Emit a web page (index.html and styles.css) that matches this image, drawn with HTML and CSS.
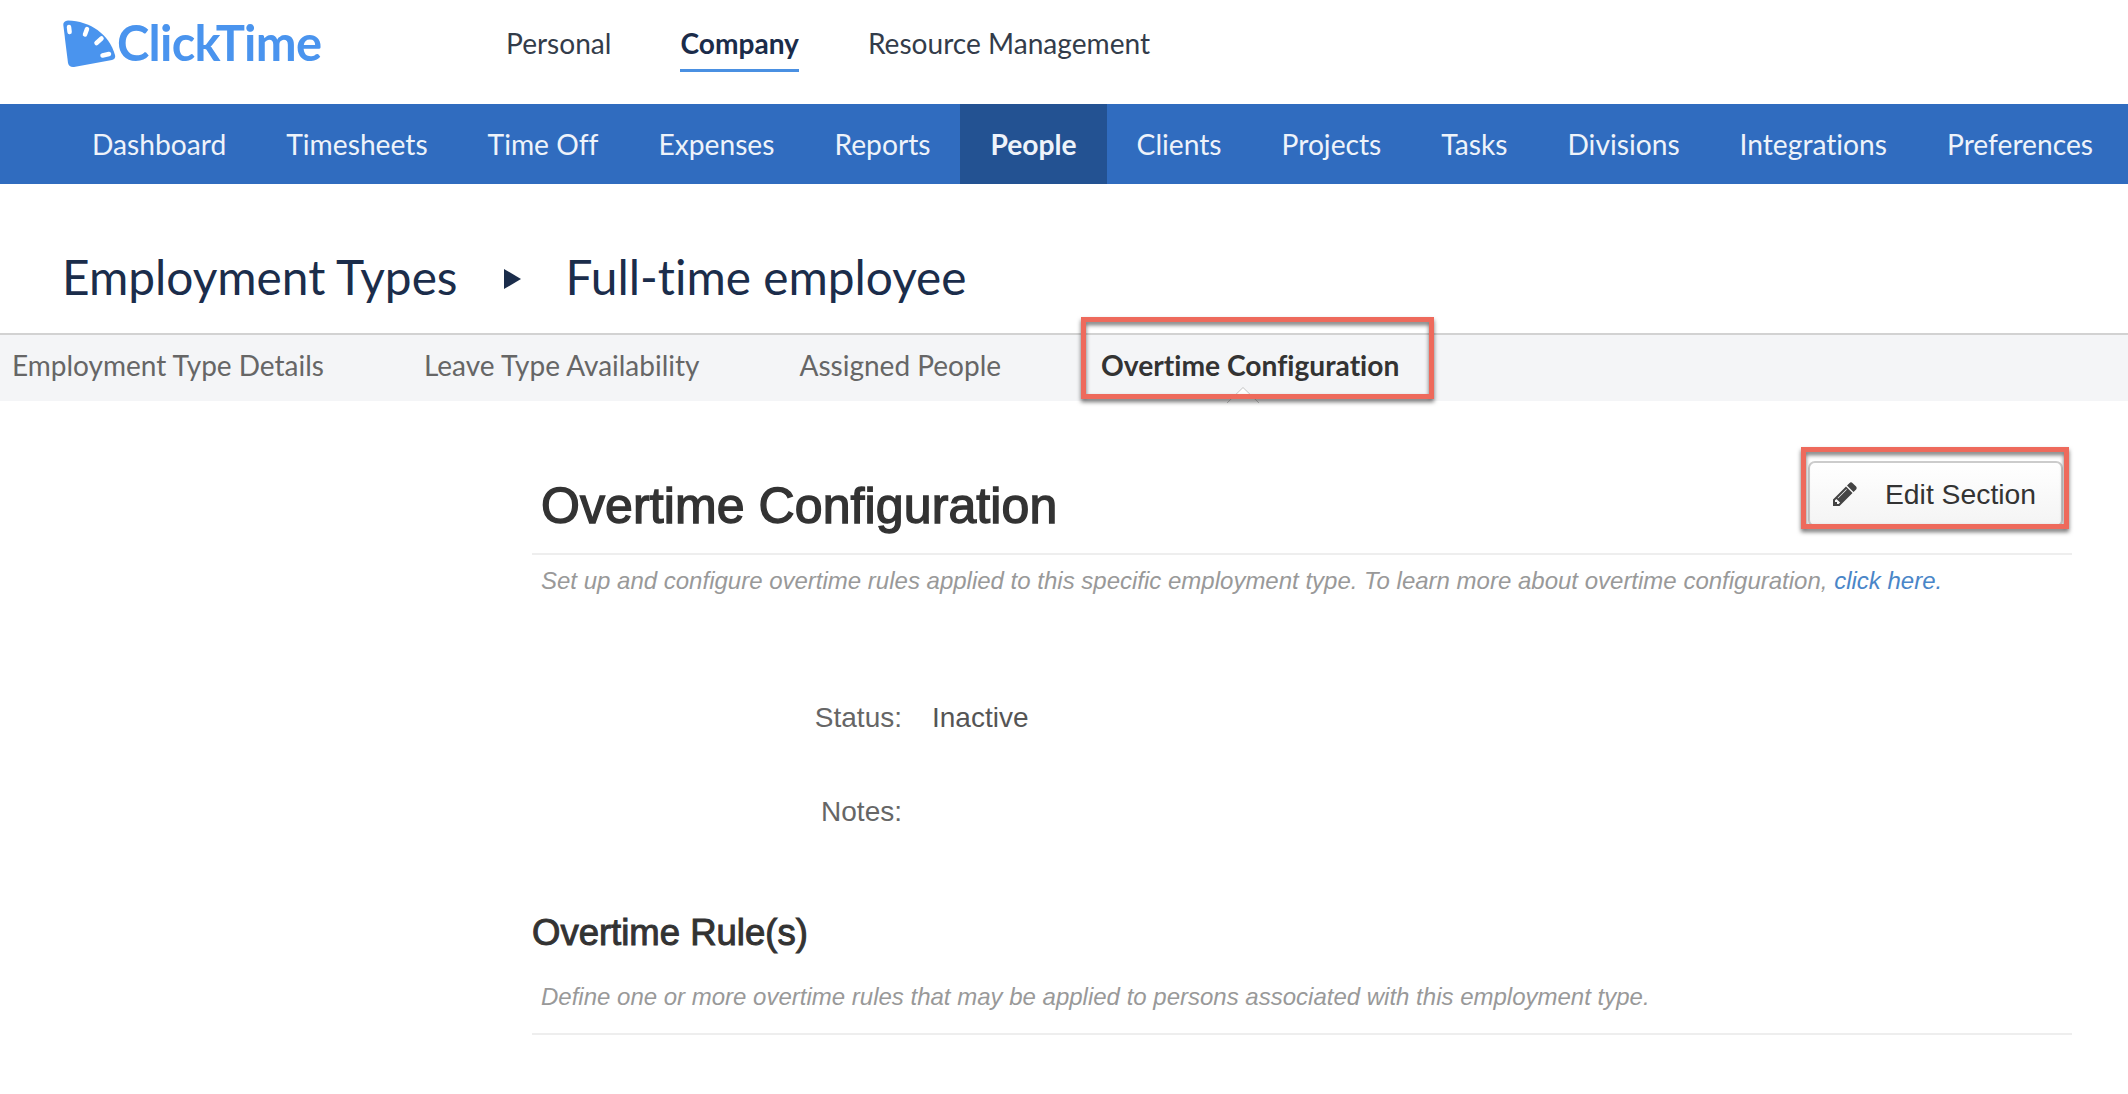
FILE: index.html
```html
<!DOCTYPE html>
<html lang="en">
<head>
<meta charset="utf-8">
<title>Overtime Configuration</title>
<link rel="stylesheet" href="styles.css">
</head>
<body>
<header class="topbar">
  <a class="logo">
    <svg class="logo-icon" viewBox="0 0 53 48" aria-hidden="true">
      <path class="logo-face" d="M5 .5C27 1 46 14 52 35Q53 39 49 40L11 47Q6 47.5 5 43L.3 5Q0 1 5 .5Z"/>
      <path class="logo-tick" d="M6 7 6.600 12M24 9 22 14.500M38.500 18.500 33.500 23M46 34 39.500 35.500"/>
    </svg>
    <span class="logo-text">ClickTime</span>
  </a>
  <nav class="product-nav">
    <a>Personal</a>
    <a class="active">Company</a>
    <a>Resource Management</a>
  </nav>
</header>
<nav class="main-nav">
  <a>Dashboard</a>
  <a>Timesheets</a>
  <a>Time Off</a>
  <a>Expenses</a>
  <a>Reports</a>
  <a class="active">People</a>
  <a>Clients</a>
  <a>Projects</a>
  <a>Tasks</a>
  <a>Divisions</a>
  <a>Integrations</a>
  <a>Preferences</a>
</nav>
<div class="crumbs">
  <h1>Employment Types</h1>
  <span class="crumb-arrow"></span>
  <h1>Full-time employee</h1>
</div>
<nav class="tabs">
  <a>Employment Type Details</a>
  <a>Leave Type Availability</a>
  <a>Assigned People</a>
  <a class="active">Overtime Configuration
    <svg class="caret" viewBox="0 0 32 16" aria-hidden="true"><path d="M0 16 16 .5 32 16"/></svg>
    <span class="callout callout-tab"></span>
  </a>
</nav>
<main class="content">
  <section class="section-head">
    <h2>Overtime Configuration</h2>
    <button class="edit-btn" type="button">
      <svg class="pencil" viewBox="128 128 1536 1536" aria-hidden="true"><path d="M491 1536l91-91-235-235-91 91v107h128v128h107zm523-928q0-22-22-22-10 0-17 7l-542 542q-7 7-7 17 0 22 22 22 10 0 17-7l542-542q7-7 7-17zm-54-192l416 416-832 832h-416v-416zm683 96q0 53-37 90l-166 166-416-416 166-165q36-38 90-38 53 0 91 38l235 234q37 39 37 91z"/></svg>
      <span>Edit Section</span>
      <span class="callout callout-btn"></span>
    </button>
  </section>
  <p class="hint hint-top">Set up and configure overtime rules applied to this specific employment type. To learn more about overtime configuration, <a>click here.</a></p>
  <dl class="fields">
    <div class="field"><dt>Status:</dt><dd>Inactive</dd></div>
    <div class="field"><dt>Notes:</dt><dd></dd></div>
  </dl>
  <h3>Overtime Rule(s)</h3>
  <p class="hint hint-rules">Define one or more overtime rules that may be applied to persons associated with this employment type.</p>
</main>
</body>
</html>
```
FILE: styles.css
```css
* { box-sizing: border-box; }
html, body { margin: 0; height: 100%; overflow: hidden; background: #fff; }
body { font-family: "Liberation Sans", Arial, sans-serif; color: #333; font-variant-ligatures: none; }
a { text-decoration: none; color: inherit; }

.topbar { height: 104px; display: flex; align-items: flex-start; padding-left: 63px; }
.logo { display: flex; align-items: flex-start; width: 443px; padding-top: 20px; }
.logo-icon { width: 53px; height: 48px; flex: none; }
.logo-face { fill: #4a94ee; }
.logo-tick { fill: none; stroke: #fff; stroke-width: 4.500; stroke-linecap: round; }
.logo-text { font-family: Lato, sans-serif; font-weight: 700; font-size: 48.800px; line-height: 44px; color: #4a94ee; margin-left: 1px; letter-spacing: -.7px; }

.product-nav { display: flex; gap: 69px; font-family: Lato, sans-serif; font-size: 28.100px; color: #333c4a; padding-top: 26px; }
.product-nav a { display: block; height: 46px; line-height: 34px; }
.product-nav .active { font-weight: 700; color: #1b2c4a; border-bottom: 3px solid #4a90e2; }

.main-nav { height: 80px; display: flex; padding-left: 62px; background: #306cbf; font-family: Lato, sans-serif; font-size: 28.200px; line-height: 80px; color: #eef3fa; }
.main-nav a { flex: none; white-space: nowrap; padding: 0 30px; }
.main-nav .active { background: #235292; font-weight: 700; }

.crumbs { height: 149px; display: flex; align-items: flex-start; padding: 67px 0 0 62px; color: #1b2d4b; }
.crumbs h1 { margin: 0; font-family: Lato, sans-serif; font-weight: 400; font-size: 47.800px; line-height: 52px; }
.crumb-arrow { width: 0; height: 0; margin: 18px 45px 0 46px; border-left: 17px solid #1b2d4b; border-top: 10.500px solid transparent; border-bottom: 10.500px solid transparent; }

.tabs { height: 68px; display: flex; padding-left: 12px; background: #f4f5f7; border-top: 2px solid #d2d2d2; font-family: Lato, sans-serif; font-size: 28px; line-height: 60px; color: #666; }
.tabs a { position: relative; margin-right: 100px; }
.tabs .active { font-weight: 700; color: #333; font-size: 28.200px; }
.caret { position: absolute; left: 126px; top: 52px; width: 32px; height: 16px; fill: #fff; stroke: #c4c4c4; stroke-width: 1; }

.callout { position: absolute; border: 5px solid #ee6a5c; filter: drop-shadow(0 3px 2px rgba(0,0,0,.55)); pointer-events: none; }
.callout-tab { left: -20px; top: -18px; width: 353px; height: 82px; }
.callout-btn { left: -9px; top: -16px; width: 268px; height: 82px; }

.content { width: 1540px; margin-left: 532px; }
.section-head { height: 154px; display: flex; align-items: flex-start; justify-content: space-between; padding: 60px 9px 0 9px; border-bottom: 2px solid #eee; }
h2 { margin: 0; padding-top: 17px; font-size: 50px; line-height: 56px; font-weight: 400; letter-spacing: .1px; color: #333; -webkit-text-stroke: 1.400px #333; }
.edit-btn { position: relative; width: 255px; height: 66px; display: flex; align-items: center; padding: 0 0 0 23px; background: linear-gradient(#fff, #f4f4f4); border: 2px solid #ccc; border-radius: 7px; font-family: inherit; font-size: 28.300px; color: #333; }
.pencil { width: 24px; height: 24px; fill: #444; margin-right: 28px; flex: none; }

.hint { margin: 0; padding-left: 9px; font-style: italic; font-size: 24px; color: #999; }
.hint a { color: #4a86c8; }
.hint-top { padding-top: 11px; line-height: 30px; }

.fields { margin: 0; padding-top: 102px; }
.field { display: flex; height: 94px; font-size: 28px; line-height: 40px; }
.field dt { width: 370px; text-align: right; color: #666; }
.field dd { margin: 0 0 0 30px; color: #555; }

h3 { margin: 0; padding-top: 25px; font-size: 36.500px; line-height: 44px; font-weight: 400; color: #333; -webkit-text-stroke: 1px #333; }
.hint-rules { margin-top: 27px; height: 53px; line-height: 30px; border-bottom: 2px solid #eee; }
```
